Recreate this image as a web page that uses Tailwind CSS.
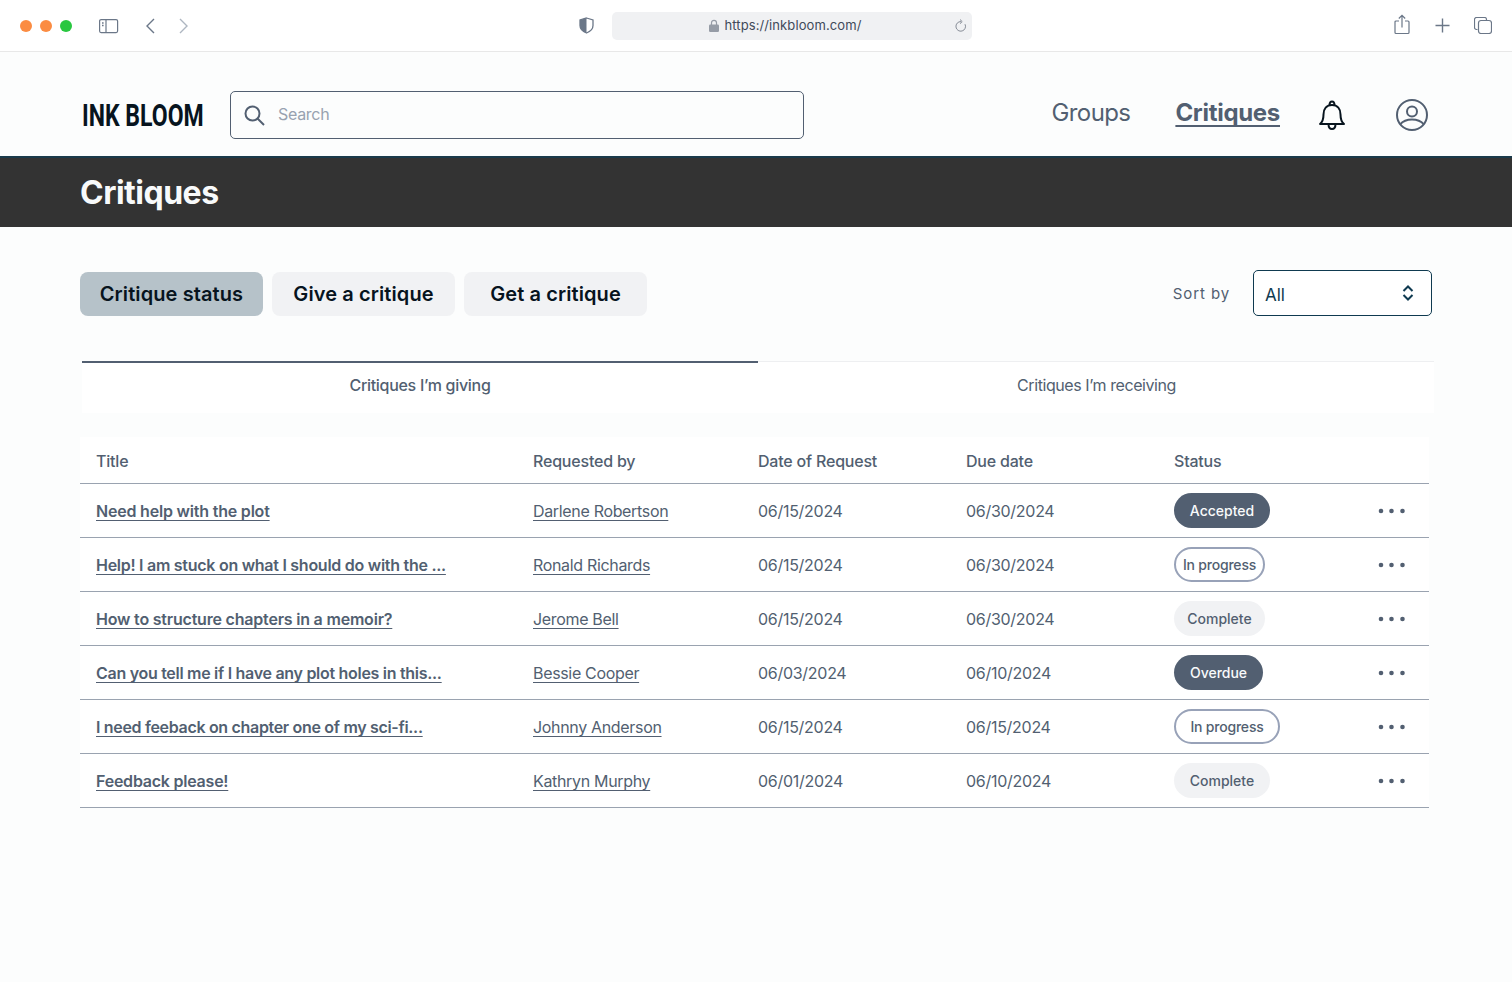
<!DOCTYPE html>
<html lang="en">
<head>
    <meta charset="UTF-8">
    <meta name="viewport" content="width=device-width, initial-scale=1.0">
    <title>Ink Bloom - Critiques</title>
    <script src="https://cdn.jsdelivr.net/npm/@tailwindcss/browser@4"></script>
</head>
<body class="h-[982px] overflow-hidden bg-[#fcfdfd] font-['Inter',sans-serif] text-[#525f71]">
    <!-- browser chrome -->
    <div class="h-[52px] bg-white border-b border-[#e8e8e8] grid grid-cols-[579px_393px_1fr] items-center">
        <div class="flex items-center pl-5">
            <span class="w-3 h-3 rounded-full bg-[#fb8c42]"></span>
            <span class="w-3 h-3 rounded-full bg-[#fb8c42] ml-2"></span>
            <span class="w-3 h-3 rounded-full bg-[#29c740] ml-2"></span>
            <svg class="ml-[27px] w-5 h-4" viewBox="0 0 20 16" fill="none" stroke="#6b7788" stroke-width="1.2">
                <rect x="0.6" y="1.6" width="18" height="13" rx="1.5"></rect>
                <path d="M7 1.6v13"></path>
                <path d="M3 5h1.6M3 7.5h1.6" stroke-width="1.4"></path>
            </svg>
            <svg class="ml-[25px] w-3 h-[18px]" viewBox="0 0 12 18" fill="none" stroke="#6b7788" stroke-width="1.4">
                <path d="M10 2 3 9l7 7"></path>
            </svg>
            <svg class="ml-[22px] w-3 h-[18px]" viewBox="0 0 12 18" fill="none" stroke="#aeb6c1" stroke-width="1.4">
                <path d="m2 2 7 7-7 7"></path>
            </svg>
        </div>
        <div class="flex items-center">
            <svg class="w-[15px] h-[17px] shrink-0" viewBox="0 0 15 17">
                <path d="M7.5 1 14 3v5.5c0 3.6-2.8 6-6.5 7.5C3.800 14.500 1 12.100 1 8.500V3z" fill="#fff" stroke="#6b7788" stroke-width="1.300"></path>
                <path d="M7.500 1 1 3v5.500c0 3.600 2.800 6 6.500 7.500z" fill="#6b7788"></path>
            </svg>
            <div class="ml-[18px] relative flex-1 h-7 rounded-[5px] bg-[#f0f1f3] flex items-center justify-center pr-[13px]">
                <svg class="w-[10px] h-[13px] mr-[5px]" viewBox="0 0 10 13" fill="none">
                    <path d="M2.500 6V3.800a2.500 2.500 0 0 1 5 0V6" stroke="#969ca6" stroke-width="1.200"></path>
                    <rect y="5.500" width="10" height="7.500" rx="1.200" fill="#969ca6"></rect>
                </svg>
                <span class="text-[13px] text-[#3f4a5a] tracking-[0.1px] pt-[1px]">https://inkbloom.com/</span>
                <svg class="absolute right-[5px] top-[7px] w-[14px] h-[14px]" viewBox="0 0 14 14" fill="none" stroke="#878d97" stroke-width="1">
                    <path d="M8 2.600a4.800 4.800 0 1 0 4 2.600"></path>
                    <path d="M7 0.500 9.200 2.600 7 4.700"></path>
                </svg>
            </div>
        </div>
        <div class="flex items-center justify-end pr-[20px]">
            <svg class="w-4 h-[21px] mb-[3px]" viewBox="0 0 16 21" fill="none" stroke="#6b7788" stroke-width="1.200">
                <path d="M5 7H2a1 1 0 0 0-1 1v10.500a1 1 0 0 0 1 1h12a1 1 0 0 0 1-1V8a1 1 0 0 0-1-1h-3"></path>
                <path d="M8 13.500V1.500M4.800 4.500 8 1.300l3.200 3.200"></path>
            </svg>
            <svg class="ml-[25px] w-[15px] h-[15px]" viewBox="0 0 15 15" fill="none" stroke="#6b7788" stroke-width="1.400">
                <path d="M7.500 0.500v14M0.500 7.500h14"></path>
            </svg>
            <svg class="ml-[24px] w-[18px] h-[17px]" viewBox="0 0 18 17" fill="none" stroke="#6b7788" stroke-width="1.200">
                <path d="M3.500 12.500H2.500a2 2 0 0 1-2-2v-8a2 2 0 0 1 2-2h8a2 2 0 0 1 2 2v1"></path>
                <rect x="4.500" y="3.500" width="13" height="13" rx="2.500"></rect>
            </svg>
        </div>
    </div>

    <!-- site header -->
    <header class="h-[104px] pt-[22px] flex items-center pl-[82px] pr-[84px]">
        <div class="w-[148px] whitespace-nowrap origin-left scale-x-[0.72] font-['Roboto',sans-serif] font-bold text-[32px] leading-none text-[#07141e]">INK BLOOM</div>
        <div class="w-[574px] h-12 rounded-[5px] border border-[#525f71] flex items-center pl-[13px]">
            <svg class="w-[21px] h-[21px]" viewBox="0 0 21 21" fill="none" stroke="#525f71" stroke-width="2">
                <circle cx="8.500" cy="8.500" r="7"></circle>
                <path d="m13.500 13.500 6.500 6.500"></path>
            </svg>
            <span class="ml-[13px] text-base tracking-[-0.3px] text-[#98a2b0] pb-[2px]">Search</span>
        </div>
        <nav class="ml-auto flex items-center">
            <a class="text-2xl tracking-[-0.6px] text-[#525f71] pb-[5px]">Groups</a>
            <a class="ml-[45px] text-2xl font-bold tracking-[-0.3px] underline underline-offset-4 decoration-[1.5px] [text-decoration-skip-ink:none] pb-[5px]">Critiques</a>
            <svg class="ml-[38px] w-7 h-8" viewBox="0 0 28 32" fill="none" stroke="#07141e" stroke-width="2">
                <path d="M2 25h24c-2.500-2-3.500-5-3.500-9.500 0-5.500-3-9.500-8.500-9.500s-8.500 4-8.500 9.500C5.500 20 4.500 23 2 25Z" stroke-linejoin="round"></path>
                <path d="M11.500 6.500C11.500 4 12.500 2.500 14 2.500s2.500 1.500 2.500 4M10.500 25c0 3 1.500 5 3.500 5s3.500-2 3.500-5"></path>
            </svg>
            <svg class="ml-[50px] w-8 h-8" viewBox="0 0 32 32" fill="none" stroke="#525f71" stroke-width="2">
                <circle cx="16" cy="16" r="15"></circle>
                <circle cx="16" cy="12.500" r="5"></circle>
                <path d="M4 25.500c3-3.500 7-5 12-5s9 1.500 12 5"></path>
            </svg>
        </nav>
    </header>

    <!-- page title -->
    <div class="h-[71px] bg-[#333333] border-t-2 border-[#1b3a4b] flex items-center px-[80px]">
        <h1 class="text-[32px] font-bold tracking-[-0.5px] text-[#f8fafb]">Critiques</h1>
    </div>

    <main class="pl-20 pr-[80px]">
        <!-- action tabs -->
        <div class="pt-[43px] flex items-end">
            <button class="w-[183px] h-11 rounded-lg bg-[#b6c2c9] text-[#07141e] text-xl font-semibold tracking-[0.1px]">Critique status</button>
            <button class="ml-[9px] w-[183px] h-11 rounded-lg bg-[#f1f2f4] text-[#07141e] text-xl font-semibold tracking-[0.1px]">Give a critique</button>
            <button class="ml-[9px] w-[183px] h-11 rounded-lg bg-[#f1f2f4] text-[#07141e] text-xl font-semibold tracking-[0.1px]">Get a critique</button>
            <span class="ml-auto self-center text-[15px] tracking-[0.9px] text-[#525f71] pt-[2px]">Sort by</span>
            <div class="ml-[23px] w-[179px] h-[46px] rounded-[5px] border border-[#0f3a50] flex items-center justify-between pl-[11px] pr-[17px] text-[#0f3a50] bg-white">
                <span class="text-[17px] pt-[5px]">All</span>
                <svg class="w-[12px] h-4" viewBox="0 0 12 16" fill="none" stroke="#0f3a50" stroke-width="2">
                    <path d="m1.500 6 4.500-4.500L10.500 6M1.500 10l4.500 4.500 4.500-4.500"></path>
                </svg>
            </div>
        </div>

        <!-- giving / receiving -->
        <div class="mt-[45px] ml-[2px] mr-[-2px] h-[52px] grid grid-cols-[676px_1fr] bg-white text-base">
            <div class="border-t-2 border-[#525f71] flex items-center justify-center pb-[6px] font-medium tracking-[-0.3px]">Critiques I’m giving</div>
            <div class="border-t border-[#eeeff1] flex items-center justify-center pb-[6px] pl-[1px] tracking-[-0.43px]">Critiques I’m receiving</div>
        </div>

        <!-- table -->
        <div class="mt-[24px] w-[1349px] bg-white text-base">
            <div class="h-[47px] grid grid-cols-[453px_225px_208px_208px_204px_1fr] items-center border-b border-[#9aa3b0] font-medium tracking-[-0.2px] pt-[2px]">
                <span class="pl-4">Title</span><span>Requested by</span><span>Date of Request</span><span>Due date</span><span>Status</span><span></span>
            </div>

            <div class="h-[54px] grid grid-cols-[453px_225px_208px_208px_204px_1fr] items-center border-b border-[#9aa3b0] tracking-[-0.28px]">
                <a class="pl-4 font-semibold tracking-[-0.2px] underline underline-offset-3 [text-decoration-skip-ink:none]">Need help with the plot</a>
                <a class="tracking-[-0.33px] underline underline-offset-3 [text-decoration-skip-ink:none]">Darlene Robertson</a>
                <span>06/15/2024</span><span>06/30/2024</span>
                <span class="w-[96px] h-[35px] rounded-full bg-[#525f71] text-[#f8fafb] text-sm font-medium tracking-normal flex items-center justify-center">Accepted</span>
                <svg class="w-7 h-[6px]" viewBox="0 0 28 6" fill="#525f71"><circle cx="3" cy="3" r="2.300"></circle><circle cx="13.500" cy="3" r="2.300"></circle><circle cx="24.500" cy="3" r="2.300"></circle></svg>
            </div>

            <div class="h-[54px] grid grid-cols-[453px_225px_208px_208px_204px_1fr] items-center border-b border-[#9aa3b0] tracking-[-0.28px]">
                <a class="pl-4 font-semibold tracking-[-0.27px] underline underline-offset-3 [text-decoration-skip-ink:none]">Help! I am stuck on what I should do with the ...</a>
                <a class="tracking-[-0.33px] underline underline-offset-3 [text-decoration-skip-ink:none]">Ronald Richards</a>
                <span>06/15/2024</span><span>06/30/2024</span>
                <span class="w-[91px] h-[35px] rounded-full border-2 border-[#98a2b8] text-sm font-medium tracking-[-0.2px] flex items-center justify-center">In progress</span>
                <svg class="w-7 h-[6px]" viewBox="0 0 28 6" fill="#525f71"><circle cx="3" cy="3" r="2.300"></circle><circle cx="13.500" cy="3" r="2.300"></circle><circle cx="24.500" cy="3" r="2.300"></circle></svg>
            </div>

            <div class="h-[54px] grid grid-cols-[453px_225px_208px_208px_204px_1fr] items-center border-b border-[#9aa3b0] tracking-[-0.28px]">
                <a class="pl-4 font-semibold tracking-[-0.2px] underline underline-offset-3 [text-decoration-skip-ink:none]">How to structure chapters in a memoir?</a>
                <a class="tracking-[-0.33px] underline underline-offset-3 [text-decoration-skip-ink:none]">Jerome Bell</a>
                <span>06/15/2024</span><span>06/30/2024</span>
                <span class="w-[91px] h-[35px] rounded-full bg-[#f1f2f4] text-sm font-medium tracking-normal flex items-center justify-center">Complete</span>
                <svg class="w-7 h-[6px]" viewBox="0 0 28 6" fill="#525f71"><circle cx="3" cy="3" r="2.300"></circle><circle cx="13.500" cy="3" r="2.300"></circle><circle cx="24.500" cy="3" r="2.300"></circle></svg>
            </div>

            <div class="h-[54px] grid grid-cols-[453px_225px_208px_208px_204px_1fr] items-center border-b border-[#9aa3b0] tracking-[-0.28px]">
                <a class="pl-4 font-semibold tracking-[-0.29px] underline underline-offset-3 [text-decoration-skip-ink:none]">Can you tell me if I have any plot holes in this...</a>
                <a class="tracking-[-0.33px] underline underline-offset-3 [text-decoration-skip-ink:none]">Bessie Cooper</a>
                <span>06/03/2024</span><span>06/10/2024</span>
                <span class="w-[89px] h-[35px] rounded-full bg-[#525f71] text-[#f8fafb] text-sm font-medium tracking-normal flex items-center justify-center">Overdue</span>
                <svg class="w-7 h-[6px]" viewBox="0 0 28 6" fill="#525f71"><circle cx="3" cy="3" r="2.300"></circle><circle cx="13.500" cy="3" r="2.300"></circle><circle cx="24.500" cy="3" r="2.300"></circle></svg>
            </div>

            <div class="h-[54px] grid grid-cols-[453px_225px_208px_208px_204px_1fr] items-center border-b border-[#9aa3b0] tracking-[-0.28px]">
                <a class="pl-4 font-semibold tracking-[-0.32px] underline underline-offset-3 [text-decoration-skip-ink:none]">I need feeback on chapter one of my sci-fi...</a>
                <a class="tracking-[-0.33px] underline underline-offset-3 [text-decoration-skip-ink:none]">Johnny Anderson</a>
                <span>06/15/2024</span><span>06/15/2024</span>
                <span class="w-[106px] h-[35px] rounded-full border-2 border-[#98a2b8] text-sm font-medium tracking-[-0.2px] flex items-center justify-center">In progress</span>
                <svg class="w-7 h-[6px]" viewBox="0 0 28 6" fill="#525f71"><circle cx="3" cy="3" r="2.300"></circle><circle cx="13.500" cy="3" r="2.300"></circle><circle cx="24.500" cy="3" r="2.300"></circle></svg>
            </div>

            <div class="h-[54px] grid grid-cols-[453px_225px_208px_208px_204px_1fr] items-center border-b border-[#9aa3b0] tracking-[-0.28px]">
                <a class="pl-4 font-semibold tracking-[-0.23px] underline underline-offset-3 [text-decoration-skip-ink:none]">Feedback please!</a>
                <a class="tracking-[-0.33px] underline underline-offset-3 [text-decoration-skip-ink:none]">Kathryn Murphy</a>
                <span>06/01/2024</span><span>06/10/2024</span>
                <span class="w-[96px] h-[35px] rounded-full bg-[#f1f2f4] text-sm font-medium tracking-normal flex items-center justify-center">Complete</span>
                <svg class="w-7 h-[6px]" viewBox="0 0 28 6" fill="#525f71"><circle cx="3" cy="3" r="2.300"></circle><circle cx="13.500" cy="3" r="2.300"></circle><circle cx="24.500" cy="3" r="2.300"></circle></svg>
            </div>
        </div>
    </main>
</body>
</html>
